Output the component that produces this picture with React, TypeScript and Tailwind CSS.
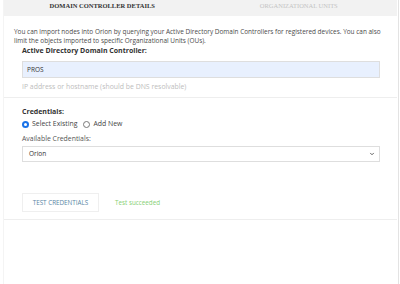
import { ChevronDown } from "lucide-react";

function Tabs() {
  return (
    <div className="flex h-[16px] bg-[#f2f2f2] font-['Liberation_Serif',serif] text-[6.5px] leading-[8px]">
      <div className="flex-1 text-center pt-[2px] font-bold text-[#333]">DOMAIN CONTROLLER DETAILS</div>
      <div className="flex-1 text-center pt-[2px] text-[#c4c4c4]">ORGANIZATIONAL UNITS</div>
    </div>
  );
}

function Radio({ label, checked }: { label: string; checked?: boolean }) {
  return (
    <label className="flex items-center gap-[3px]">
      <span
        className={`w-[7px] h-[7px] rounded-full flex items-center justify-center ${
          checked ? "bg-[#1a73e8]" : "border border-[#777] bg-white"
        }`}
      >
        {checked && <span className="w-[3px] h-[3px] rounded-full bg-white" />}
      </span>
      <span>{label}</span>
    </label>
  );
}

export default function App() {
  return (
    <div className="w-[399px] h-[284px] bg-white border-r border-[#e3e3e3] pl-[3px] font-['Open_Sans',sans-serif] text-[#4a4a4a]">
      <div className="w-[394px] h-full border-l border-[#f4f4f4]">
        <Tabs />
        <p className="pl-[10px] pr-[10px] pt-[11px] text-[6.45px] leading-[9px]">
          You can import nodes into Orion by querying your Active Directory Domain Controllers for registered devices. You can also limit the objects imported to specific Organizational Units (OUs).
        </p>
        <div className="px-[18px]">
          <div className="mt-[1px] text-[7px] leading-[10px] font-bold text-[#333]">Active Directory Domain Controller:</div>
          <div className="mt-[5px] h-[17px] w-[358px] bg-[#e8f0fe] border border-[#dedede] flex items-center px-[4px] text-[6.5px] text-[#333]">
            PROS
          </div>
          <div className="mt-[4px] text-[6.9px] leading-[9px] text-[#bdbdbd]">IP address or hostname (should be DNS resolvable)</div>
        </div>
        <div className="mt-[6px] border-t border-[#eeeeee]" />
        <div className="px-[18px] pt-[9px]">
          <div className="text-[7px] leading-[10px] font-bold text-[#333]">Credentials:</div>
          <div className="mt-[2px] flex gap-[6px] text-[6.9px] leading-[10px] text-[#444]">
            <Radio label="Select Existing" checked />
            <Radio label="Add New" />
          </div>
          <div className="mt-[5px] text-[6.9px] leading-[10px] text-[#555]">Available Credentials:</div>
          <div className="mt-[2px] h-[16px] w-[358px] border border-[#dedede] flex items-center justify-between pl-[6px] pr-[4px] text-[6.5px] text-[#333]">
            <span>Orion</span>
            <ChevronDown className="w-[6px] h-[6px] text-[#333]" strokeWidth={3} />
          </div>
          <div className="mt-[31px] flex items-center gap-[16px]">
            <button className="h-[19px] w-[77px] border border-[#efefef] text-[6.3px] text-[#5a87a6]">
              TEST CREDENTIALS
            </button>
            <span className="text-[6.3px] text-[#86cf76]">Test succeeded</span>
          </div>
        </div>
        <div className="mt-[7px] border-t border-[#eeeeee]" />
      </div>
    </div>
  );
}
